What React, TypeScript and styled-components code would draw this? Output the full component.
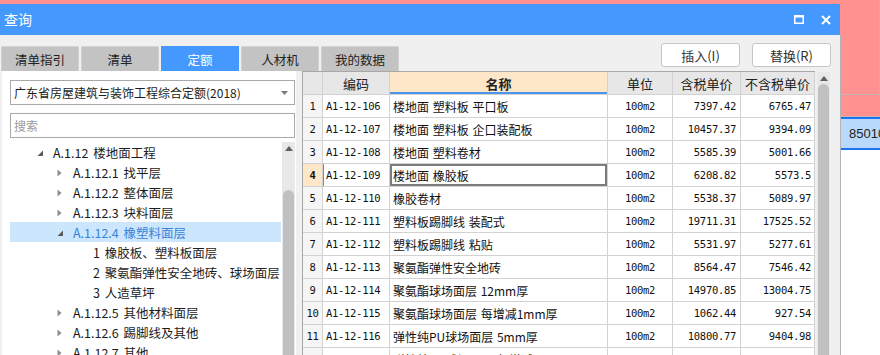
import React from "react";
import styled, { createGlobalStyle, css } from "styled-components";

const GlobalStyle = createGlobalStyle`
  html, body {
    margin: 0;
    padding: 0;
  }
  body {
    font-family: "Noto Sans CJK SC", "Noto Sans", sans-serif;
  }
`;

type TreeNode = {
  level: number;
  state: "open" | "closed" | "leaf";
  text: string;
  selected?: boolean;
};

const treeNodes: TreeNode[] = [
  { level: 0, state: "open", text: "A.1.12 楼地面工程" },
  { level: 1, state: "closed", text: "A.1.12.1 找平层" },
  { level: 1, state: "closed", text: "A.1.12.2 整体面层" },
  { level: 1, state: "closed", text: "A.1.12.3 块料面层" },
  { level: 1, state: "open", text: "A.1.12.4 橡塑料面层", selected: true },
  { level: 2, state: "leaf", text: "1 橡胶板、塑料板面层" },
  { level: 2, state: "leaf", text: "2 聚氨酯弹性安全地砖、球场面层" },
  { level: 2, state: "leaf", text: "3 人造草坪" },
  { level: 1, state: "closed", text: "A.1.12.5 其他材料面层" },
  { level: 1, state: "closed", text: "A.1.12.6 踢脚线及其他" },
  { level: 1, state: "closed", text: "A.1.12.7 其他" },
];

const quotaRows = [
  ["A1-12-106", "楼地面 塑料板 平口板", "7397.42", "6765.47"],
  ["A1-12-107", "楼地面 塑料板 企口装配板", "10457.37", "9394.09"],
  ["A1-12-108", "楼地面 塑料卷材", "5585.39", "5001.66"],
  ["A1-12-109", "楼地面 橡胶板", "6208.82", "5573.5"],
  ["A1-12-110", "橡胶卷材", "5538.37", "5089.97"],
  ["A1-12-111", "塑料板踢脚线 装配式", "19711.31", "17525.52"],
  ["A1-12-112", "塑料板踢脚线 粘贴", "5531.97", "5277.61"],
  ["A1-12-113", "聚氨酯弹性安全地砖", "8564.47", "7546.42"],
  ["A1-12-114", "聚氨酯球场面层 12mm厚", "14970.85", "13004.75"],
  ["A1-12-115", "聚氨酯球场面层 每增减1mm厚", "1062.44", "927.54"],
  ["A1-12-116", "弹性纯PU球场面层 5mm厚", "10800.77", "9404.98"],
  ["A1-12-117", "弹性纯PU球场面层 每增减1mm厚", "1766.21", "1562.36"],
];

const tabs = ["清单指引", "清单", "定额", "人材机", "我的数据"];

const App: React.FC = () => {
  return (
    <>
      <GlobalStyle />
      <Page>
        {/* spreadsheet that sits behind the dialog */}
        <Sheet>
          <SheetRow $height={95}>
            <SheetCell $width={162} />
            <SheetCell $width={490} />
            <SheetCell $width={86} />
            <SheetCell />
          </SheetRow>
          <SheetRow $height={22} />
          <SheetSelectedRow>
            <SheetCell $width={841} $plain />
            <SheetText>85010</SheetText>
          </SheetSelectedRow>
        </Sheet>

        <Dialog>
          <TitleBar>
            <Title>查询</Title>
            <TitleButtons>
              <svg width="10" height="9" viewBox="0 0 10 9">
                <rect x="0.75" y="1" width="8.5" height="7.25" fill="none" stroke="#fff" strokeWidth="1.5" />
                <rect x="0" y="0" width="10" height="2.5" fill="#fff" />
              </svg>
              <svg width="10" height="10" viewBox="0 0 10 10">
                <path d="M1 1 L9 9 M9 1 L1 9" stroke="#fff" strokeWidth="2" />
              </svg>
            </TitleButtons>
          </TitleBar>

          <Body>
            <Toolbar>
              <Tabs>
                {tabs.map((t) => (
                  <Tab key={t} $active={t === "定额"}>
                    {t}
                  </Tab>
                ))}
              </Tabs>
              <Actions>
                <ActionButton>插入(I)</ActionButton>
                <ActionButton>替换(R)</ActionButton>
              </Actions>
            </Toolbar>

            <Content>
              <LeftPanel>
                <Select>
                  <span>广东省房屋建筑与装饰工程综合定额(2018)</span>
                  <svg width="7" height="4" viewBox="0 0 7 4">
                    <path d="M0 0 H7 L3.5 4 Z" fill="#7a7a7a" />
                  </svg>
                </Select>
                <Search>搜索</Search>
                <TreeArea>
                  <Tree>
                    {treeNodes.map((n) => (
                      <TreeRow key={n.text} $level={n.level} $selected={n.selected}>
                        <Toggle>
                          {n.state === "open" && (
                            <svg width="7" height="7" viewBox="0 0 7 7">
                              <path d="M6 0.5 V6 H0.5 Z" fill="#5a5a5a" />
                            </svg>
                          )}
                          {n.state === "closed" && (
                            <svg width="5" height="8" viewBox="0 0 5 8">
                              <path d="M0.5 0.5 L4.5 4 L0.5 7.5 Z" fill="#8c8c8c" />
                            </svg>
                          )}
                        </Toggle>
                        {n.text}
                      </TreeRow>
                    ))}
                  </Tree>
                  <TreeScroll>
                    <ScrollArrow />
                    <ScrollThumb $top={48} />
                  </TreeScroll>
                </TreeArea>
              </LeftPanel>

              <TableArea>
                <Grid>
                  <HeadRow>
                    <HeadCell $w={20} />
                    <HeadCell $w={67}>编码</HeadCell>
                    <HeadCell $w={218} $current>
                      名称
                    </HeadCell>
                    <HeadCell $w={65}>单位</HeadCell>
                    <HeadCell $w={68}>含税单价</HeadCell>
                    <HeadCell $w={74}>不含税单价</HeadCell>
                  </HeadRow>
                  {quotaRows.map((r, i) => {
                    const focused = i === 3;
                    return (
                      <DataRow key={r[0]}>
                        <NumCell $current={focused}>{i + 1}</NumCell>
                        <CodeCell $current={focused}>{r[0]}</CodeCell>
                        <NameCell $focused={focused}>{r[1]}</NameCell>
                        <MonoCell $w={65} $align="center">
                          100m2
                        </MonoCell>
                        <MonoCell $w={68} $align="right" $pad={4}>
                          {r[2]}
                        </MonoCell>
                        <MonoCell $w={74} $align="right" $pad={3}>
                          {r[3]}
                        </MonoCell>
                      </DataRow>
                    );
                  })}
                </Grid>
                <TableScroll>
                  <ScrollArrow />
                  <ScrollThumb $top={12} />
                </TableScroll>
              </TableArea>
            </Content>
          </Body>
        </Dialog>
      </Page>
    </>
  );
};

export default App;

const Page = styled.div`
  position: relative;
  width: 880px;
  height: 355px;
  overflow: hidden;
  background: #ffffff;
`;

/* ---------- background sheet ---------- */

const Sheet = styled.div`
  display: flex;
  flex-direction: column;
`;

const SheetRow = styled.div<{ $height: number }>`
  display: flex;
  height: ${(p) => p.$height}px;
  box-sizing: border-box;
  background: #ff9191;
  border-bottom: 1px solid #c9b2b2;
`;

const SheetCell = styled.div<{ $width?: number; $plain?: boolean }>`
  flex: ${(p) => (p.$width ? `0 0 ${p.$width}px` : "1")};
  box-sizing: border-box;
  border-right: ${(p) => (p.$plain ? "none" : "1px solid #c8b0b0")};
`;

const SheetSelectedRow = styled.div`
  display: flex;
  align-items: center;
  height: 33px;
  box-sizing: border-box;
  background: #b9d9fb;
  border-top: 2px solid #1a73f0;
  border-bottom: 2px solid #1a73f0;
`;

const SheetText = styled.span`
  padding-left: 8px;
  font-family: "Liberation Sans", Arial, sans-serif;
  font-size: 13px;
  color: #222;
`;

/* ---------- dialog ---------- */

const Dialog = styled.div`
  position: absolute;
  top: 4px;
  left: 0;
  width: 841px;
  bottom: -10px;
  display: flex;
  flex-direction: column;
`;

const TitleBar = styled.div`
  flex: 0 0 31px;
  width: 840px;
  display: flex;
  align-items: center;
  justify-content: space-between;
  background: #4598fe;
  color: #fff;
`;

const Title = styled.span`
  padding-left: 4px;
  font-size: 14px;
  line-height: 31px;
`;

const TitleButtons = styled.div`
  display: flex;
  align-items: center;
  gap: 17px;
  padding-right: 9px;

  svg {
    display: block;
  }
`;

const Body = styled.div`
  flex: 1;
  display: flex;
  flex-direction: column;
  background: #f0f0f0;
  border-right: 1px solid #b4b4b4;
`;

const Toolbar = styled.div`
  flex: 0 0 36px;
  display: flex;
  justify-content: space-between;
  padding: 0 9px 0 1px;
`;

const Tabs = styled.div`
  display: flex;
  align-self: flex-end;
  gap: 2px;
`;

const Tab = styled.div<{ $active?: boolean }>`
  width: 78px;
  height: 25px;
  box-sizing: border-box;
  display: flex;
  align-items: center;
  justify-content: center;
  font-size: 12.5px;
  border: 1px solid ${(p) => (p.$active ? "#4598fe" : "#d2d2d2")};
  border-bottom: none;
  background: ${(p) => (p.$active ? "#4598fe" : "#c3c3c3")};
  color: ${(p) => (p.$active ? "#ffffff" : "#222")};
`;

const Actions = styled.div`
  display: flex;
  gap: 12px;
  margin-top: 8px;
`;

const ActionButton = styled.div`
  width: 79px;
  height: 24px;
  box-sizing: border-box;
  display: flex;
  align-items: center;
  justify-content: center;
  background: #fff;
  border: 1px solid #c6c6c6;
  border-radius: 3px;
  font-size: 13px;
  color: #333;
`;

const Content = styled.div`
  flex: 1;
  display: flex;
  gap: 6px;
  padding-left: 2px;
  min-height: 0;
`;

/* ---------- left tree panel ---------- */

const LeftPanel = styled.div`
  width: 294px;
  display: flex;
  flex-direction: column;
  gap: 8px;
  padding: 9px 1px 0 8px;
  box-sizing: border-box;
  background: #fff;
`;

const fieldBox = css`
  height: 25px;
  box-sizing: border-box;
  display: flex;
  align-items: center;
  padding: 0 6px 0 3px;
  border: 1px solid #a9a9a9;
  background: #fff;
  font-size: 12px;
`;

const Select = styled.div`
  ${fieldBox};
  justify-content: space-between;
  color: #1c1c1c;
`;

const Search = styled.div`
  ${fieldBox};
  color: #9a9a9a;
`;

const TreeArea = styled.div`
  flex: 1;
  display: flex;
  gap: 1px;
  margin-top: -4px;
`;

const Tree = styled.div`
  width: 272px;
  display: flex;
  flex-direction: column;
`;

const TreeRow = styled.div<{ $level: number; $selected?: boolean }>`
  height: 20px;
  display: flex;
  align-items: center;
  padding-left: ${(p) => 27 + p.$level * 20}px;
  font-size: 12.5px;
  white-space: pre;
  word-spacing: 2px;
  color: ${(p) => (p.$selected ? "#3b82d8" : "#1c1c1c")};
  background: ${(p) => (p.$selected ? "#cce6fd" : "transparent")};
`;

const Toggle = styled.span`
  width: 16px;
  display: flex;
  align-items: center;
  padding-top: 2px;
  svg {
    display: block;
  }
`;

const ScrollTrack = styled.div`
  position: relative;
  width: 13px;
  background: #e8e8e8;
`;

const TreeScroll = styled(ScrollTrack)``;

const TableScroll = styled(ScrollTrack)`
  margin-left: 2px;
  margin-top: 1px;
`;

const ScrollArrow = styled.div`
  margin: 4px auto 0;
  width: 0;
  height: 0;
  border-left: 4px solid transparent;
  border-right: 4px solid transparent;
  border-bottom: 5px solid #5f5f5f;
`;

const ScrollThumb = styled.div<{ $top: number }>`
  position: absolute;
  left: 1px;
  right: 1px;
  top: ${(p) => p.$top}px;
  bottom: 0;
  background: #c0c0c0;
  border-radius: 6px 6px 0 0;
`;

/* ---------- quota table ---------- */

const TableArea = styled.div`
  display: flex;
`;

const Grid = styled.div`
  display: flex;
  flex-direction: column;
  border-top: 1px solid #a8a8a8;
  border-left: 1px solid #a8a8a8;
  background: #fff;
`;

const HeadRow = styled.div`
  display: flex;
  height: 23px;
  box-sizing: border-box;
  border-bottom: 1px solid #d2d2d2;
`;

const HeadCell = styled.div<{ $w: number; $current?: boolean }>`
  width: ${(p) => p.$w}px;
  box-sizing: border-box;
  display: flex;
  align-items: center;
  justify-content: center;
  font-size: 13px;
  color: #222;
  border-right: 1px solid #d2d2d2;
  background: ${(p) => (p.$current ? "#fee6c9" : "#e7e7e7")};
  font-weight: ${(p) => (p.$current ? 700 : 400)};
  box-shadow: ${(p) => (p.$current ? "inset 0 -2px 0 #4a94ee" : "none")};
`;

const DataRow = styled.div`
  display: flex;
  height: 23px;
  flex: 0 0 23px;
  box-sizing: border-box;
  border-bottom: 1px solid #d2d2d2;
`;

const cellBase = css`
  box-sizing: border-box;
  display: flex;
  align-items: center;
  white-space: nowrap;
  overflow: hidden;
  border-right: 1px solid #d2d2d2;
  color: #111;
`;

const mono = css`
  font-family: "DejaVu Sans Mono", "Liberation Mono", monospace;
  font-size: 10.5px;
  letter-spacing: -0.3px;
`;

const NumCell = styled.div<{ $current?: boolean }>`
  ${cellBase};
  ${mono};
  width: 20px;
  justify-content: center;
  background: ${(p) => (p.$current ? "#fee6c9" : "#f5f5f5")};
  font-weight: ${(p) => (p.$current ? 700 : 400)};
`;

const CodeCell = styled.div<{ $current?: boolean }>`
  ${cellBase};
  ${mono};
  width: 67px;
  padding-left: 3px;
  box-shadow: ${(p) => (p.$current ? "inset 1px 0 0 #4a94ee" : "none")};
`;

const NameCell = styled.div<{ $focused?: boolean }>`
  ${cellBase};
  width: 218px;
  padding-left: 3px;
  font-size: 12px;
  white-space: pre;
  word-spacing: 1px;
  box-shadow: ${(p) => (p.$focused ? "inset 0 0 0 2px #7c7c7c" : "none")};
`;

const MonoCell = styled.div<{ $w: number; $align: "center" | "right"; $pad?: number }>`
  ${cellBase};
  ${mono};
  width: ${(p) => p.$w}px;
  justify-content: ${(p) => (p.$align === "center" ? "center" : "flex-end")};
  padding-right: ${(p) => p.$pad ?? 0}px;
`;
